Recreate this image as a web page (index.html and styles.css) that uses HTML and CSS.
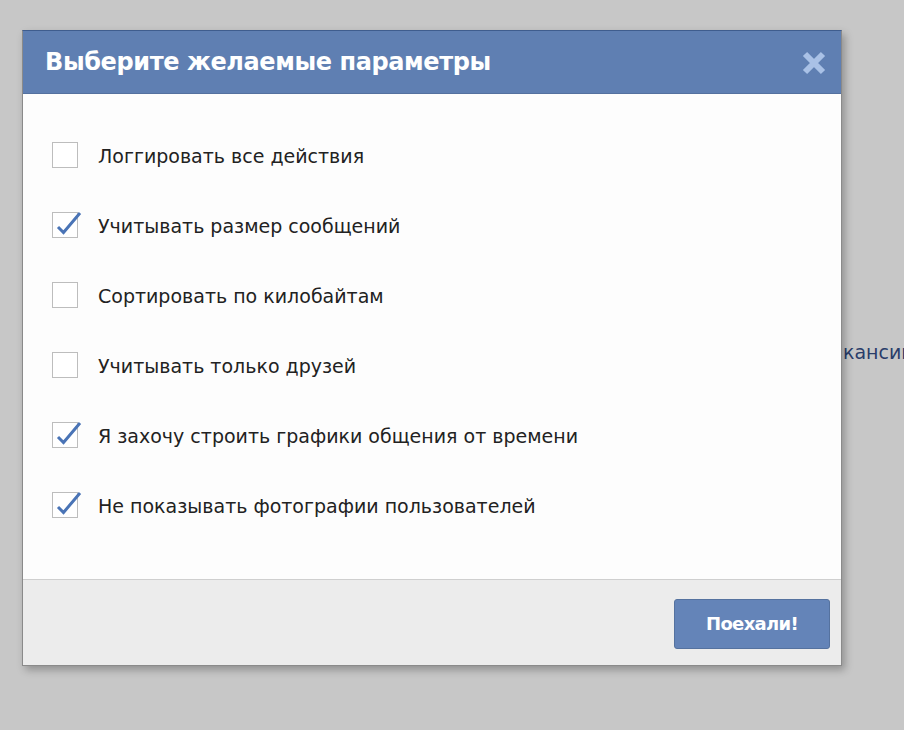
FILE: index.html
```html
<!DOCTYPE html>
<html lang="ru">
<head>
<meta charset="utf-8">
<link rel="stylesheet" href="styles.css">
</head>
<body>
<div class="page">
  <div class="bg-text">кансии</div>
</div>
<div class="dialog">
  <div class="header">
    <div class="title">Выберите желаемые параметры</div>
    <svg class="close" width="24" height="24" viewBox="0 0 24 24"><path d="M3 3 L21 21 M21 3 L3 21" stroke="#a9c1e6" stroke-width="6" stroke-linecap="butt"/></svg>
  </div>
  <div class="body">
    <div class="row"><span class="box"></span><span class="label">Логгировать все действия</span></div>
    <div class="row"><span class="box"><svg class="check" width="30" height="30" viewBox="0 0 30 30"><path d="M5 18 L10.5 23.5 L27 4" fill="none" stroke="#4a74b6" stroke-width="3"/></svg></span><span class="label">Учитывать размер сообщений</span></div>
    <div class="row"><span class="box"></span><span class="label">Сортировать по килобайтам</span></div>
    <div class="row"><span class="box"></span><span class="label">Учитывать только друзей</span></div>
    <div class="row"><span class="box"><svg class="check" width="30" height="30" viewBox="0 0 30 30"><path d="M5 18 L10.5 23.5 L27 4" fill="none" stroke="#4a74b6" stroke-width="3"/></svg></span><span class="label">Я захочу строить графики общения от времени</span></div>
    <div class="row"><span class="box"><svg class="check" width="30" height="30" viewBox="0 0 30 30"><path d="M5 18 L10.5 23.5 L27 4" fill="none" stroke="#4a74b6" stroke-width="3"/></svg></span><span class="label">Не показывать фотографии пользователей</span></div>
  </div>
  <div class="footer">
    <button class="btn">Поехали!</button>
  </div>
</div>
</body>
</html>
```
FILE: styles.css
```css
html, body {
  margin: 0;
  padding: 0;
}
body {
  width: 904px;
  height: 730px;
  background: #c7c7c7;
  font-family: "DejaVu Sans", Verdana, sans-serif;
  overflow: hidden;
  position: relative;
}
.page {
  display: flex;
  justify-content: flex-end;
  padding-top: 341px;
}
.bg-text {
  width: 61px;
  overflow: hidden;
  white-space: nowrap;
  color: #2a3d6a;
  font-size: 19px;
}
.dialog {
  position: absolute;
  left: 22px;
  top: 30px;
  width: 818px;
  height: 634px;
  border: 1px solid #8a8a8a;
  border-top-color: #3f5d8e;
  background: #fff;
  box-shadow: 3px 4px 8px rgba(0,0,0,0.28);
  display: flex;
  flex-direction: column;
}
.header {
  height: 62px;
  background: #5f7fb2;
  display: flex;
  align-items: center;
  justify-content: space-between;
  padding: 0 15px 0 22px;
  border-bottom: 1px solid #54719f;
}
.title {
  color: #fff;
  font-weight: bold;
  font-size: 24px;
  letter-spacing: -0.4px;
  margin-top: -1px;
}
.close {
  display: block;
  margin-top: 1px;
}
.body {
  flex: 1;
  padding: 26px 0 0 29px;
  background: #fdfdfd;
  border-bottom: 1px solid #cfcfcf;
}
.row {
  height: 70px;
  display: flex;
  align-items: center;
  gap: 20px;
}
.box {
  width: 24px;
  height: 24px;
  border: 1px solid #bdbdbd;
  background: #fff;
  position: relative;
  flex: none;
}
.check {
  position: absolute;
  left: 0;
  top: -4px;
}
.label {
  font-size: 19px;
  color: #222;
  margin-top: 1px;
}
.footer {
  height: 85px;
  background: #ececec;
  display: flex;
  justify-content: flex-end;
  align-items: center;
  padding-right: 11px;
}
.btn {
  width: 156px;
  height: 50px;
  background: #6484b8;
  border: 1px solid #55729f;
  border-radius: 3px;
  color: #fff;
  font-family: "DejaVu Sans", Verdana, sans-serif;
  font-weight: bold;
  font-size: 18px;
  letter-spacing: -0.7px;
  margin-top: 2px;
}
```
